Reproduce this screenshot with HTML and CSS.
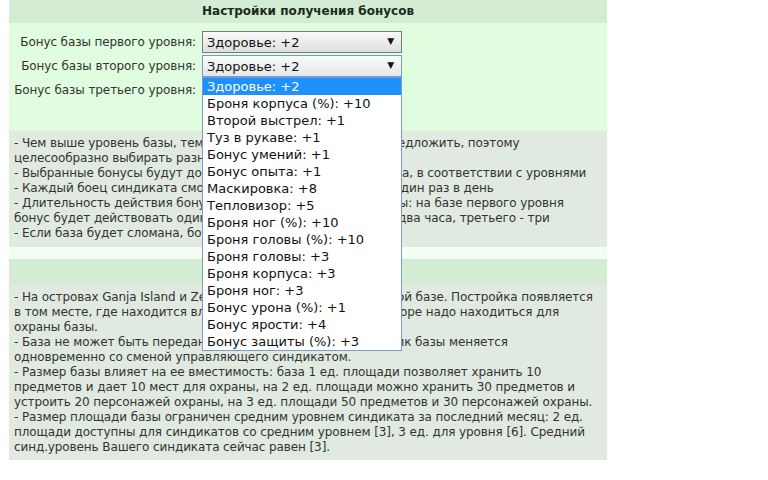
FILE: index.html
```html
<!DOCTYPE html>
<html>
    <head>
        <meta charset="utf-8">
        <title>Настройки базы</title>
        <link rel="stylesheet" href="styles.css">
    </head>
    <body>
        <div class="base">
            <div class="head">Настройки получения бонусов</div>
            <form class="choose">
                <label>Бонус базы первого уровня:</label>
                <span class="pick"><select><option>Здоровье: +2</option></select></span>

                <label>Бонус базы второго уровня:</label>
                <span class="pick open">
                    <select class="focus"><option>Здоровье: +2</option></select>
                    <!-- the list of the second select, left open -->
                    <div class="list">
                        <div class="item on">Здоровье: +2</div>
                        <div class="item">Броня корпуса (%): +10</div>
                        <div class="item">Второй выстрел: +1</div>
                        <div class="item">Туз в рукаве: +1</div>
                        <div class="item">Бонус умений: +1</div>
                        <div class="item">Бонус опыта: +1</div>
                        <div class="item">Маскировка: +8</div>
                        <div class="item">Тепловизор: +5</div>
                        <div class="item">Броня ног (%): +10</div>
                        <div class="item">Броня головы (%): +10</div>
                        <div class="item">Броня головы: +3</div>
                        <div class="item">Броня корпуса: +3</div>
                        <div class="item">Броня ног: +3</div>
                        <div class="item">Бонус урона (%): +1</div>
                        <div class="item">Бонус ярости: +4</div>
                        <div class="item">Бонус защиты (%): +3</div>
                    </div>
                </span>

                <label>Бонус базы третьего уровня:</label>
                <span class="pick"><select><option>Здоровье: +2</option></select></span>
            </form>
            <div class="info first">
                - Чем выше уровень базы, тем больше бонусов она может предложить, поэтому целесообразно выбирать разные бонусы<br>
                - Выбранные бонусы будут доступны в базе вашего синдиката, в соответствии с уровнями<br>
                - Каждый боец синдиката сможет получить бонусы на базе один раз в день<br>
                - Длительность действия бонусов определяется уровнем базы: на базе первого уровня<br>
                бонус будет действовать один час, на базе второго уровня - два часа, третьего - три<br>
                - Если база будет сломана, бонусы не выдаются
            </div>
            <div class="gap"></div>
            <div class="head second">Информация о базах</div>
            <div class="info">
                - На островах Ganja Island и Zed Island можно строить по одной базе. Постройка появляется в том месте, где находится владение синдиката, в этом секторе надо находиться для охраны базы.<br>
                - База не может быть передана иному синдикату, собственник базы меняется одновременно со сменой управляющего синдикатом.<br>
                - Размер базы влияет на ее вместимость: база 1 ед. площади позволяет хранить 10 предметов и дает 10 мест для охраны, на 2 ед. площади можно хранить 30 предметов и устроить 20 персонажей охраны, на 3 ед. площади 50 предметов и 30 персонажей охраны.<br>
                - Размер площади базы ограничен средним уровнем синдиката за последний месяц: 2 ед. площади доступны для синдикатов со средним уровнем [3], 3 ед. для уровня [6]. Средний синд.уровень Вашего синдиката сейчас равен [3].
            </div>
        </div>
    </body>
</html>
```
FILE: styles.css
```css
body
{
    margin:0;
    background-color:white;
    font-family:"DejaVu Sans", Verdana, sans-serif;
    font-size:12px;
    letter-spacing:-0.1px;
    color:#333;
}
.base
{
    width:598px;
    margin-left:9px;
    background-color:#f2fff2;
}
.head
{
    height:23px;
    line-height:23px;
    background-color:#d3ecd3;
    text-align:center;
    font-weight:bold;
    letter-spacing:0;
    color:#1c2a1c;
}
.head.second
{
    height:25px;
    line-height:25px;
}
.choose
{
    margin:0;
    padding:8px 0 30px 0;
    background-color:#e0fde0;
    display:grid;
    grid-template-columns:187px 200px;
    column-gap:6px;
    row-gap:2px;
    align-items:center;
}
.choose label
{
    text-align:right;
}
.pick
{
    position:relative;
    display:block;
    height:22px;
}
.pick select
{
    -webkit-appearance:none;
    appearance:none;
    width:200px;
    height:22px;
    margin:0;
    padding:0 0 0 4px;
    border:1px solid #7a7a7a;
    border-radius:0;
    background:linear-gradient(#fafafa, #dedede);
    font-family:"DejaVu Sans", Verdana, sans-serif;
    font-size:13px;
    color:#111;
    outline:none;
}
.pick select.focus
{
    border-color:#6f9bd6;
    background:linear-gradient(#fcfcfc, #e4e6e8);
}
.pick::after
{
    content:"\25BC";
    position:absolute;
    right:8px;
    top:5px;
    font-size:9px;
    color:#111;
    pointer-events:none;
}
.list
{
    position:absolute;
    top:100%;
    left:0;
    width:198px;
    border:1px solid #7f9cc4;
    background-color:white;
    z-index:2;
}
.item
{
    height:17px;
    line-height:17px;
    padding-left:4px;
    font-size:13px;
    letter-spacing:0;
    color:#111;
    white-space:nowrap;
}
.item.on
{
    background-color:#1e90ff;
    color:white;
}
.info
{
    padding:6px 10px 5px 5px;
    line-height:15px;
    background-color:#e0eae0;
}
.info.first
{
    padding:5px 10px 6px 5px;
}
.gap
{
    height:12px;
}
```
